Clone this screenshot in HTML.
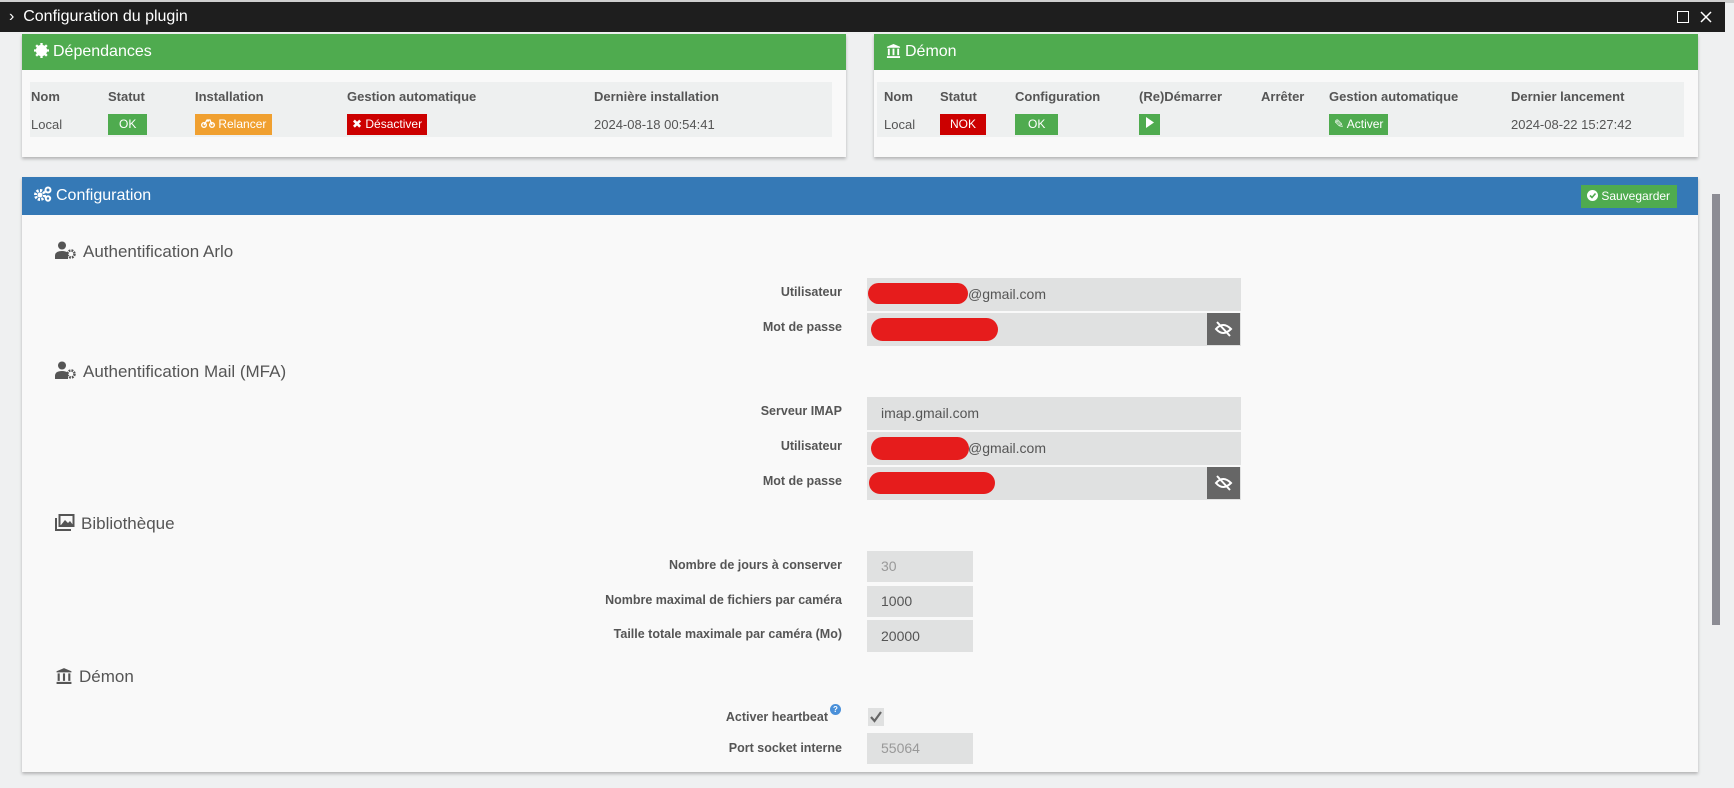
<!DOCTYPE html>
<html><head><meta charset="utf-8"><style>
*{box-sizing:border-box;margin:0;padding:0}
body{width:1734px;height:788px;overflow:hidden;background:#eff0f1;font-family:"Liberation Sans",sans-serif;position:relative;color:#555}
.abs{position:absolute}
.top{left:0;top:0;width:1734px;height:3px;background:#cfcfcf}
.bar{left:0;top:2px;width:1725px;height:30px;background:#1e1e1e;color:#fff;font-size:16px;line-height:30px;padding-left:9px}
.panel{background:#f9f9f9;box-shadow:0 2px 3px rgba(0,0,0,.25)}
.ph{height:36px;color:#fff;font-size:16px;line-height:36px;padding-left:12px}
.ph svg{vertical-align:-2px;margin-right:4px}
.green{background:#4fab4f}
.blue{background:#3579b6}
table{border-collapse:collapse;position:absolute;background:#eef0f0;font-size:13px}
th{text-align:left;font-weight:bold;color:#555;height:29px;padding:0}
td{height:26px;padding:0;color:#555}
.b{display:inline-block;color:#fff;font-size:12px;height:21px;line-height:21px;padding:0 8px}
.lab{position:absolute;right:892px;font-size:12.5px;font-weight:bold;color:#555;text-align:right}
.inp{position:absolute;left:867px;height:33px;background:#e0e1e1;font-size:14px;line-height:33px;padding-left:14px;color:#555}
.h{position:absolute;left:55px;font-size:17px;color:#555}
.h svg{vertical-align:-2px;margin-right:6px}
.blob{position:absolute;background:#e61c1c;border-radius:12px}
.eye{position:absolute;left:1207px;width:33px;height:32px;background:#666}
</style></head><body>
<div class="abs top"></div>
<div class="abs bar">› &nbsp;Configuration du plugin
<span style="position:absolute;left:1677px;top:9px;width:12px;height:12px;border:1.5px solid #fff"></span>
<svg style="position:absolute;left:1700px;top:9px" width="12" height="12"><path d="M1 1L11 11M11 1L1 11" stroke="#fff" stroke-width="1.5"/></svg></div>

<div class="abs panel" style="left:22px;top:34px;width:824px;height:123px">
<div class="ph green"><svg width="15" height="15" viewBox="0 0 16 16"><circle cx="8" cy="8" r="6" fill="#fff"/><path d="M8 0v16M0 8h16M2.3 2.3l11.4 11.4M13.7 2.3L2.3 13.7" stroke="#fff" stroke-width="2.5"/></svg>Dépendances</div></div>
<table style="left:30px;top:82px;width:802px">
<tr><th style="width:78px;padding-left:1px">Nom</th><th style="width:87px">Statut</th><th style="width:152px">Installation</th><th style="width:247px">Gestion automatique</th><th>Dernière installation</th></tr>
<tr><td style="padding-left:1px">Local</td><td><span class="b" style="background:#4fab4f;padding:0 11px">OK</span></td><td><span class="b" style="background:#f0a030;padding:0 6px"><svg width="14" height="9" viewBox="0 0 14 9"><circle cx="3" cy="6" r="2.3" fill="none" stroke="#fff" stroke-width="1.4"/><circle cx="11" cy="6" r="2.3" fill="none" stroke="#fff" stroke-width="1.4"/><path d="M3 6L6 1h3l2 5M5 2h3" fill="none" stroke="#fff" stroke-width="1.3"/></svg> Relancer</span></td><td><span class="b" style="background:#c00;padding:0 5px">✖ Désactiver</span></td><td>2024-08-18 00:54:41</td></tr>
</table>

<div class="abs panel" style="left:874px;top:34px;width:824px;height:123px">
<div class="ph green"><svg width="15" height="15" viewBox="0 0 16 16"><path d="M8 1L1 4v1h14V4z M2 6h2v7H2zM7 6h2v7H7zM12 6h2v7h-2zM1 14h14v2H1z" fill="#fff"/></svg>Démon</div></div>
<table style="left:877px;top:82px;width:807px">
<tr><th style="width:63px;padding-left:7px">Nom</th><th style="width:75px">Statut</th><th style="width:124px">Configuration</th><th style="width:122px">(Re)Démarrer</th><th style="width:68px">Arrêter</th><th style="width:182px">Gestion automatique</th><th>Dernier lancement</th></tr>
<tr><td style="padding-left:7px">Local</td><td><span class="b" style="background:#c00;padding:0 10px">NOK</span></td><td><span class="b" style="background:#4fab4f;padding:0 13px">OK</span></td><td><span class="b" style="background:#4fab4f;padding:0 6px"><svg width="9" height="11"><path d="M1 0L9 5.5L1 11z" fill="#fff"/></svg></span></td><td></td><td><span class="b" style="background:#4fab4f;padding:0 5px">✎ Activer</span></td><td>2024-08-22 15:27:42</td></tr>
</table>

<div class="abs panel" style="left:22px;top:177px;width:1676px;height:595px">
<div class="ph blue" style="height:38px;line-height:38px"><svg width="18" height="16" viewBox="0 0 18 16"><circle cx="6" cy="9" r="4.5" fill="none" stroke="#fff" stroke-width="3" stroke-dasharray="2.2 1.3"/><circle cx="6" cy="9" r="2.5" fill="#fff"/><circle cx="14" cy="4" r="2.5" fill="none" stroke="#fff" stroke-width="2"/><circle cx="14" cy="12.5" r="2.2" fill="none" stroke="#fff" stroke-width="2"/></svg>Configuration</div>
<span class="abs" style="left:1559px;top:8px;width:96px;height:23px;background:#4fab4f;color:#fff;font-size:12px;line-height:23px;padding-left:6px"><svg width="11" height="11" style="vertical-align:-1px"><circle cx="5.5" cy="5.5" r="5.5" fill="#fff"/><path d="M3 5.5l2 2 3.5-4" fill="none" stroke="#4fab4f" stroke-width="1.6"/></svg> Sauvegarder</span>
</div>
<div class="abs" style="left:1712px;top:194px;width:8px;height:431px;background:#8c8c94"></div>

<div class="h" style="top:241px"><svg width="22" height="18" viewBox="0 0 22 18"><circle cx="7" cy="4.5" r="4" fill="#555"/><path d="M0 18v-3q0-5 7-5q4 0 6 2v6z" fill="#555"/><circle cx="16" cy="13" r="3.5" fill="none" stroke="#555" stroke-width="2.5" stroke-dasharray="1.8 1"/></svg>Authentification Arlo</div>
<div class="lab" style="top:285px">Utilisateur</div>
<div class="inp" style="top:278px;width:374px;padding-left:101px">@gmail.com</div>
<div class="blob" style="left:868px;top:283px;width:100px;height:21px"></div>
<div class="lab" style="top:320px">Mot de passe</div>
<div class="inp" style="top:313px;width:374px"></div>
<div class="blob" style="left:871px;top:318px;width:127px;height:23px"></div>
<div class="eye" style="top:313px"><svg width="33" height="32"><path d="M9 16q7-8 15 0q-8 8-15 0z" fill="none" stroke="#fff" stroke-width="2"/><path d="M10 9l13 14" stroke="#fff" stroke-width="2"/></svg></div>

<div class="h" style="top:361px"><svg width="22" height="18" viewBox="0 0 22 18"><circle cx="7" cy="4.5" r="4" fill="#555"/><path d="M0 18v-3q0-5 7-5q4 0 6 2v6z" fill="#555"/><circle cx="16" cy="13" r="3.5" fill="none" stroke="#555" stroke-width="2.5" stroke-dasharray="1.8 1"/></svg>Authentification Mail (MFA)</div>
<div class="lab" style="top:404px">Serveur IMAP</div>
<div class="inp" style="top:397px;width:374px">imap.gmail.com</div>
<div class="lab" style="top:439px">Utilisateur</div>
<div class="inp" style="top:432px;width:374px;padding-left:101px">@gmail.com</div>
<div class="blob" style="left:871px;top:437px;width:98px;height:23px"></div>
<div class="lab" style="top:474px">Mot de passe</div>
<div class="inp" style="top:467px;width:374px"></div>
<div class="blob" style="left:869px;top:472px;width:126px;height:22px"></div>
<div class="eye" style="top:467px"><svg width="33" height="32"><path d="M9 16q7-8 15 0q-8 8-15 0z" fill="none" stroke="#fff" stroke-width="2"/><path d="M10 9l13 14" stroke="#fff" stroke-width="2"/></svg></div>

<div class="h" style="top:514px"><svg width="20" height="17" viewBox="0 0 20 17"><path d="M1 4v12h15" fill="none" stroke="#555" stroke-width="2"/><rect x="4.5" y="1" width="14" height="11" fill="none" stroke="#555" stroke-width="2"/><path d="M6 11l4-5 3 3 2-2 3 4z" fill="#555"/></svg>Bibliothèque</div>
<div class="lab" style="top:558px">Nombre de jours à conserver</div>
<div class="inp" style="top:551px;width:106px;height:31px;line-height:31px;color:#999">30</div>
<div class="lab" style="top:593px">Nombre maximal de fichiers par caméra</div>
<div class="inp" style="top:586px;width:106px;height:31px;line-height:31px">1000</div>
<div class="lab" style="top:627px">Taille totale maximale par caméra (Mo)</div>
<div class="inp" style="top:620px;width:106px;height:32px;line-height:32px">20000</div>

<div class="h" style="top:667px"><svg width="18" height="17" viewBox="0 0 16 16"><path d="M8 1L1 4v1h14V4z M2 6h2v7H2zM7 6h2v7H7zM12 6h2v7h-2zM1 14h14v2H1z" fill="#555"/></svg>Démon</div>
<div class="lab" style="top:710px;right:906px">Activer heartbeat</div>
<span class="abs" style="left:830px;top:704px;width:11px;height:11px;border-radius:50%;background:#4a90d9;color:#fff;font-size:8px;text-align:center;line-height:11px;font-weight:bold">?</span>
<div class="abs" style="left:868px;top:708px;width:16px;height:18px;background:#e0e1e1"><svg width="16" height="18"><path d="M3 9l3.5 4L13 4" fill="none" stroke="#666" stroke-width="2.2"/></svg></div>
<div class="lab" style="top:741px">Port socket interne</div>
<div class="inp" style="top:733px;width:106px;height:31px;line-height:31px;color:#999">55064</div>
</body></html>
